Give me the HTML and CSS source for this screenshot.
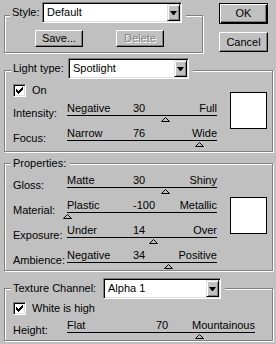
FILE: index.html
```html
<!DOCTYPE html>
<html lang="en">
<head>
  <meta charset="UTF-8">
  <title>Lighting Effects</title>
  <link rel="stylesheet" href="styles.css">
</head>

<body>

<div class="dialog">

  <!-- style + ok/cancel -->
  <div class="top">
    <div class="group style-group">
      <div class="title">
        <span class="title-label">Style:</span>
        <div class="combo style-combo">
          <span class="combo-text">Default</span>
          <span class="drop"><i class="arrow"></i></span>
        </div>
      </div>
      <div class="style-buttons">
        <button class="btn save">Save...</button>
        <button class="btn delete" disabled>Delete</button>
      </div>
    </div>

    <div class="actions">
      <button class="btn ok">OK</button>
      <button class="btn cancel">Cancel</button>
    </div>
  </div>

  <!-- light type -->
  <div class="group light-group">
    <div class="title">
      <span class="title-label">Light type:</span>
      <div class="combo light-combo">
        <span class="combo-text">Spotlight</span>
        <span class="drop"><i class="arrow"></i></span>
      </div>
    </div>
    <div class="group-body">
      <div class="rows">
        <div class="check">
          <span class="box"><svg width="7" height="7" viewBox="0 0 7 7"><path d="M6 0h1v1h-1z M5 1h2v1h-2z M0 2h1v1h-1z M4 2h3v1h-3z M0 3h2v1h-2z M3 3h3v1h-3z M0 4h5v1h-5z M1 5h3v1h-3z M2 6h1v1h-1z"/></svg></span>
          <span>On</span>
        </div>
        <div class="row">
          <span class="row-label">Intensity:</span>
          <div class="slider">
            <div class="scale"><span class="lo">Negative</span><span class="val">30</span><span class="hi">Full</span></div>
            <div class="track"><svg class="thumb" style="left: 65%" width="9" height="5" viewBox="0 0 9 5"><path d="M0.5 4.5 L4.5 0.5 L8.5 4.5 Z"/></svg></div>
          </div>
        </div>
        <div class="row">
          <span class="row-label">Focus:</span>
          <div class="slider">
            <div class="scale"><span class="lo">Narrow</span><span class="val">76</span><span class="hi">Wide</span></div>
            <div class="track"><svg class="thumb" style="left: 88%" width="9" height="5" viewBox="0 0 9 5"><path d="M0.5 4.5 L4.5 0.5 L8.5 4.5 Z"/></svg></div>
          </div>
        </div>
      </div>
      <div class="swatch"></div>
    </div>
  </div>

  <!-- properties -->
  <div class="group props-group">
    <div class="title">
      <span>Properties:</span>
    </div>
    <div class="group-body">
      <div class="rows">
        <div class="row">
          <span class="row-label">Gloss:</span>
          <div class="slider">
            <div class="scale"><span class="lo">Matte</span><span class="val">30</span><span class="hi">Shiny</span></div>
            <div class="track"><svg class="thumb" style="left: 65%" width="9" height="5" viewBox="0 0 9 5"><path d="M0.5 4.5 L4.5 0.5 L8.5 4.5 Z"/></svg></div>
          </div>
        </div>
        <div class="row">
          <span class="row-label">Material:</span>
          <div class="slider">
            <div class="scale"><span class="lo">Plastic</span><span class="val">-100</span><span class="hi">Metallic</span></div>
            <div class="track"><svg class="thumb" style="left: 0%" width="9" height="5" viewBox="0 0 9 5"><path d="M0.5 4.5 L4.5 0.5 L8.5 4.5 Z"/></svg></div>
          </div>
        </div>
        <div class="row">
          <span class="row-label">Exposure:</span>
          <div class="slider">
            <div class="scale"><span class="lo">Under</span><span class="val">14</span><span class="hi">Over</span></div>
            <div class="track"><svg class="thumb" style="left: 57%" width="9" height="5" viewBox="0 0 9 5"><path d="M0.5 4.5 L4.5 0.5 L8.5 4.5 Z"/></svg></div>
          </div>
        </div>
        <div class="row">
          <span class="row-label">Ambience:</span>
          <div class="slider">
            <div class="scale"><span class="lo">Negative</span><span class="val">34</span><span class="hi">Positive</span></div>
            <div class="track"><svg class="thumb" style="left: 67%" width="9" height="5" viewBox="0 0 9 5"><path d="M0.5 4.5 L4.5 0.5 L8.5 4.5 Z"/></svg></div>
          </div>
        </div>
      </div>
      <div class="swatch"></div>
    </div>
  </div>

  <!-- texture channel -->
  <div class="group texture-group">
    <div class="title">
      <span class="title-label">Texture Channel:</span>
      <div class="combo texture-combo">
        <span class="combo-text">Alpha 1</span>
        <span class="drop"><i class="arrow"></i></span>
      </div>
    </div>
    <div class="rows">
      <div class="check">
        <span class="box"><svg width="7" height="7" viewBox="0 0 7 7"><path d="M6 0h1v1h-1z M5 1h2v1h-2z M0 2h1v1h-1z M4 2h3v1h-3z M0 3h2v1h-2z M3 3h3v1h-3z M0 4h5v1h-5z M1 5h3v1h-3z M2 6h1v1h-1z"/></svg></span>
        <span>White is high</span>
      </div>
      <div class="row">
        <span class="row-label">Height:</span>
        <div class="slider long">
          <div class="scale"><span class="lo">Flat</span><span class="val">70</span><span class="hi">Mountainous</span></div>
          <div class="track"><svg class="thumb" style="left: 70%" width="9" height="5" viewBox="0 0 9 5"><path d="M0.5 4.5 L4.5 0.5 L8.5 4.5 Z"/></svg></div>
        </div>
      </div>
    </div>
  </div>

</div>

</body>
</html>
```

FILE: styles.css
```css
body {
  margin: 0;
  background-color: #c0c0c0;
  font-family: "Liberation Sans", Arial, sans-serif;
  font-size: 11px;
  line-height: 13px;
  color: #000;
}

.dialog {
  width: 276px;
  height: 344px;
  overflow: hidden;
}

.top {
  display: flex;
  align-items: flex-start;
  height: 53px;
}

/* etched group boxes */
.group {
  box-sizing: border-box;
  display: flex;
  flex-direction: column;
  width: 269px;
  margin-left: 4px;
  padding-left: 8px;
  border: 1px solid #808080;
  box-shadow: inset 1px 1px 0 #fff, 1px 1px 0 #fff;
}

.style-group {
  width: 199px;
  height: 38px;
  margin-top: 15px;
  padding-left: 7px;
}

.light-group {
  height: 82px;
  margin-top: 17px;
}

.props-group {
  height: 108px;
  margin-top: 11px;
}

.texture-group {
  height: 53px;
  margin-top: 17px;
}

.title {
  display: flex;
  align-items: center;
  align-self: flex-start;
  background-color: #c0c0c0;
  margin-left: -2px;
  padding: 0 4px 0 2px;
}

.style-group .title { margin-top: -14px; }
.light-group .title { margin-top: -13px; }
.props-group .title { margin-top: -7px; }
.texture-group .title { margin-top: -11px; }

.style-group .title-label { width: 30px; }
.light-group .title-label { width: 55px; }
.texture-group .title-label { width: 90px; }

/* combo boxes */
.combo {
  box-sizing: border-box;
  display: flex;
  align-items: center;
  height: 21px;
  padding: 1px 1px 1px 4px;
  background-color: #fff;
  border: 1px solid;
  border-color: #808080 #fff #fff #808080;
  box-shadow: inset 1px 1px 0 #000, inset -1px -1px 0 #dfdfdf;
}

.style-combo { width: 140px; }
.light-combo { width: 121px; }
.texture-combo { width: 118px; }

.combo-text {
  flex: 1;
}

.drop {
  box-sizing: border-box;
  display: flex;
  align-items: center;
  justify-content: center;
  align-self: stretch;
  width: 13px;
  background-color: #c0c0c0;
  border: 1px solid;
  border-color: #dfdfdf #000 #000 #dfdfdf;
  box-shadow: inset 1px 1px 0 #fff, inset -1px -1px 0 #808080;
}

.arrow {
  width: 1px;
  height: 0;
  border-left: 3px solid transparent;
  border-right: 3px solid transparent;
  border-top: 4px solid #000;
}

/* buttons */
.btn {
  box-sizing: border-box;
  font: inherit;
  color: #000;
  padding: 0;
  background-color: #c0c0c0;
  border: 1px solid;
  border-color: #fff #000 #000 #fff;
  box-shadow: inset -1px -1px 0 #808080;
}

.style-buttons {
  display: flex;
  gap: 33px;
  margin-top: 7px;
  padding-left: 23px;
}

.save, .delete {
  width: 48px;
  height: 17px;
}

.delete:disabled {
  color: #808080;
  text-shadow: 1px 1px 0 #fff;
}

.actions {
  display: flex;
  flex-direction: column;
  gap: 8px;
  margin-left: 16px;
  padding-top: 3px;
}

.ok {
  width: 49px;
  height: 21px;
  border-color: #000;
  box-shadow: inset 1px 1px 0 #fff, inset -1px -1px 0 #000, inset -2px -2px 0 #808080;
}

.cancel {
  width: 49px;
  height: 20px;
}

/* rows and sliders */
.group-body {
  display: flex;
}

.rows {
  display: flex;
  flex-direction: column;
}

.check {
  display: flex;
  align-items: center;
  gap: 6px;
  height: 13px;
}

.light-group .check { margin-top: 5px; }
.texture-group .check { margin-top: 3px; }

.box {
  box-sizing: border-box;
  display: flex;
  align-items: center;
  justify-content: center;
  width: 13px;
  height: 13px;
  background-color: #fff;
  border: 1px solid;
  border-color: #808080 #fff #fff #808080;
  box-shadow: inset 1px 1px 0 #000, inset -1px -1px 0 #dfdfdf;
}

.box svg {
  display: block;
  shape-rendering: crispEdges;
}

.row {
  display: flex;
  margin-top: 6px;
}

.light-group .check + .row { margin-top: 5px; }
.props-group .row:first-child,
.texture-group .check + .row { margin-top: 4px; }

.row-label {
  width: 54px;
  padding-top: 5px;
}

.slider {
  width: 150px;
}

.slider.long {
  width: 188px;
}

.scale {
  display: flex;
  height: 13px;
  white-space: nowrap;
}

.lo {
  width: 66px;
}

.long .lo {
  width: 89px;
}

.hi {
  margin-left: auto;
}

.track {
  position: relative;
  height: 5px;
  border-top: 1px solid #000;
}

.thumb {
  position: absolute;
  top: 1px;
  margin-left: -4px;
  display: block;
  fill: none;
  stroke: #000;
}

.swatch {
  box-sizing: border-box;
  width: 37px;
  height: 37px;
  margin-left: 13px;
  background-color: #fff;
  border: 1px solid #000;
}

.light-group .swatch { margin-top: 13px; }
.props-group .swatch { margin-top: 27px; }
```
